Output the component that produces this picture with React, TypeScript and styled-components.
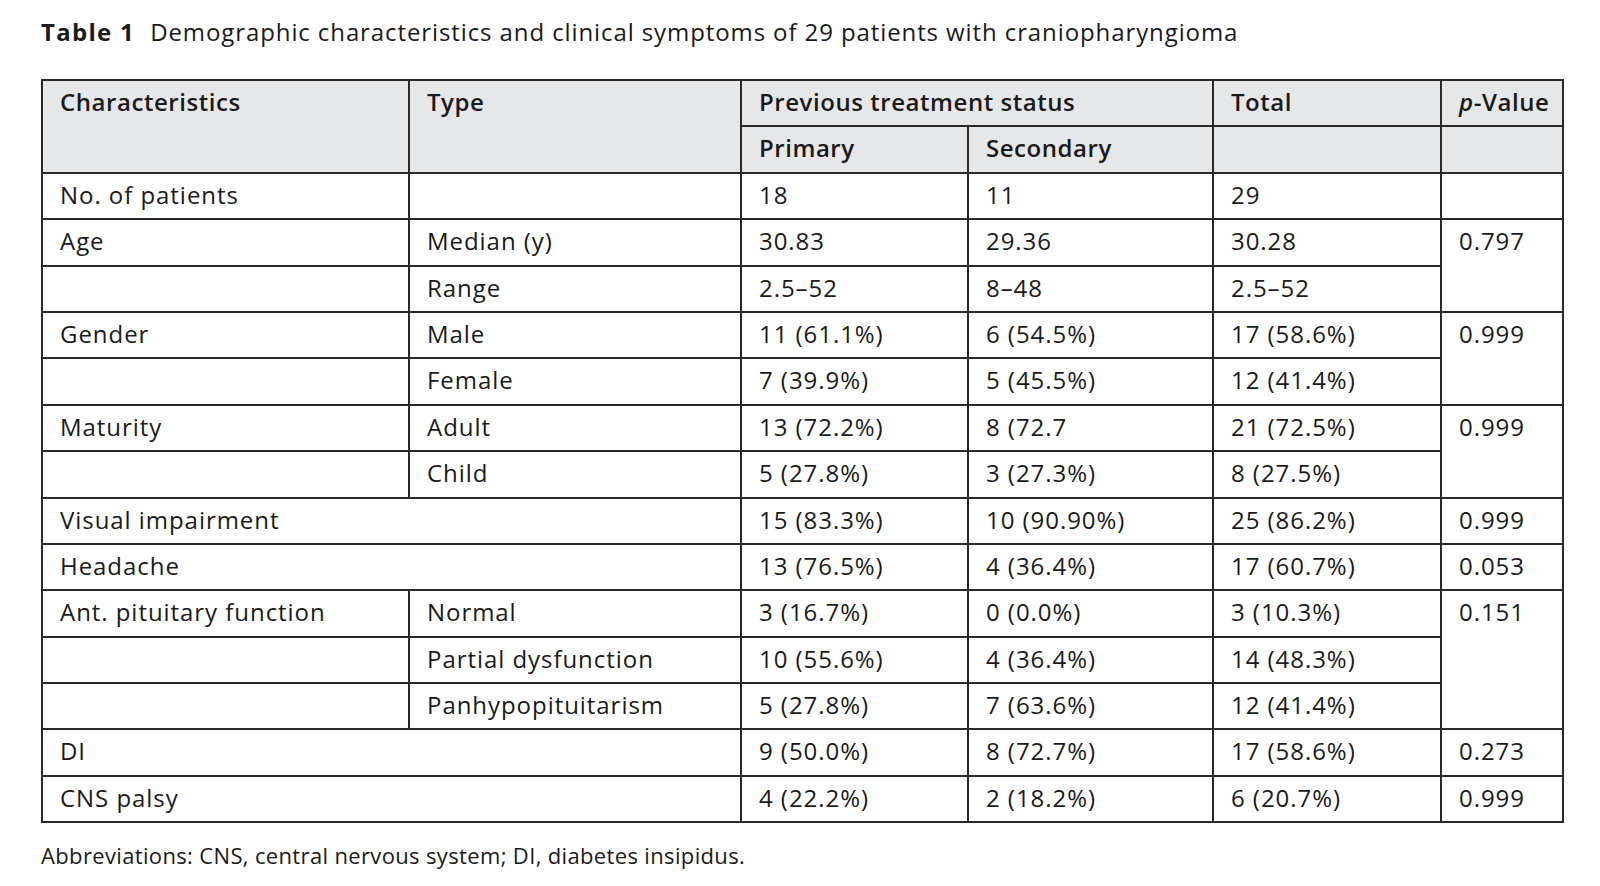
import React from "react";
import styled, { createGlobalStyle } from "styled-components";

const Global = createGlobalStyle`
  html, body { margin: 0; padding: 0; background: #ffffff; }
  body { font-family: "Open Sans", "Noto Sans", sans-serif; color: #1a1a1a; }
`;

const Page = styled.div`
  padding: 14px 38px 0 41px;
  width: 1521px;
`;

const Title = styled.div`
  font-size: 24px;
  letter-spacing: 0.9px;
  line-height: 36px;
  height: 48px;
  white-space: nowrap;
`;

const Label = styled.span`
  font-weight: 700;
  letter-spacing: 1.3px;
  margin-right: 15px;
`;

const Table = styled.table`
  border-collapse: collapse;
  width: 1521px;
  table-layout: fixed;
  font-size: 24px;
  margin-top: 17px;
`;

const Col = styled.col<{ $w: number }>`
  width: ${(p) => p.$w}px;
`;

const Row = styled.tr`
  height: 46.4px;
`;

const Cell = styled.td<{ $head?: boolean }>`
  border: 2px solid #2a2a2a;
  padding: 5px 8px 0 17px;
  vertical-align: top;
  text-align: left;
  line-height: 32px;
  white-space: nowrap;
  letter-spacing: ${(p) => (p.$head ? "0.55px" : "0.95px")};
  background: ${(p) => (p.$head ? "#e6e7e9" : "#ffffff")};
  font-weight: ${(p) => (p.$head ? 600 : 400)};
`;

const Note = styled.div`
  font-size: 22px;
  letter-spacing: 0.35px;
  line-height: 30px;
  margin-top: 17px;
  white-space: nowrap;
`;

type C = string | { t: React.ReactNode; rs?: number; cs?: number };

const widths = [367, 332, 227, 245, 228, 122];

const body: C[][] = [
  ["No. of patients", "", "18", "11", "29", ""],
  ["Age", "Median (y)", "30.83", "29.36", "30.28", { t: "0.797", rs: 2 }],
  ["", "Range", "2.5–52", "8–48", "2.5–52"],
  ["Gender", "Male", "11 (61.1%)", "6 (54.5%)", "17 (58.6%)", { t: "0.999", rs: 2 }],
  ["", "Female", "7 (39.9%)", "5 (45.5%)", "12 (41.4%)"],
  ["Maturity", "Adult", "13 (72.2%)", "8 (72.7", "21 (72.5%)", { t: "0.999", rs: 2 }],
  ["", "Child", "5 (27.8%)", "3 (27.3%)", "8 (27.5%)"],
  [{ t: "Visual impairment", cs: 2 }, "15 (83.3%)", "10 (90.90%)", "25 (86.2%)", "0.999"],
  [{ t: "Headache", cs: 2 }, "13 (76.5%)", "4 (36.4%)", "17 (60.7%)", "0.053"],
  ["Ant. pituitary function", "Normal", "3 (16.7%)", "0 (0.0%)", "3 (10.3%)", { t: "0.151", rs: 3 }],
  ["", "Partial dysfunction", "10 (55.6%)", "4 (36.4%)", "14 (48.3%)"],
  ["", "Panhypopituitarism", "5 (27.8%)", "7 (63.6%)", "12 (41.4%)"],
  [{ t: "DI", cs: 2 }, "9 (50.0%)", "8 (72.7%)", "17 (58.6%)", "0.273"],
  [{ t: "CNS palsy", cs: 2 }, "4 (22.2%)", "2 (18.2%)", "6 (20.7%)", "0.999"],
];

const head: C[][] = [
  [
    { t: "Characteristics", rs: 2 },
    { t: "Type", rs: 2 },
    { t: "Previous treatment status", cs: 2 },
    "Total",
    { t: <><i>p</i>-Value</> },
  ],
  ["Primary", "Secondary", "", ""],
];

function renderRow(r: C[], isHead: boolean, i: number) {
  return (
    <Row key={i}>
      {r.map((c, j) =>
        typeof c === "string" ? (
          <Cell key={j} as={isHead ? "th" : "td"} $head={isHead}>
            {c}
          </Cell>
        ) : (
          <Cell key={j} as={isHead ? "th" : "td"} $head={isHead} rowSpan={c.rs} colSpan={c.cs}>
            {c.t}
          </Cell>
        )
      )}
    </Row>
  );
}

export default function App() {
  return (
    <Page>
      <Global />
      <Title>
        <Label>Table 1</Label>
        Demographic characteristics and clinical symptoms of 29 patients with craniopharyngioma
      </Title>
      <Table>
        <colgroup>
          {widths.map((w, i) => (
            <Col key={i} $w={w} />
          ))}
        </colgroup>
        <thead>{head.map((r, i) => renderRow(r, true, i))}</thead>
        <tbody>{body.map((r, i) => renderRow(r, false, i))}</tbody>
      </Table>
      <Note>Abbreviations: CNS, central nervous system; DI, diabetes insipidus.</Note>
    </Page>
  );
}
